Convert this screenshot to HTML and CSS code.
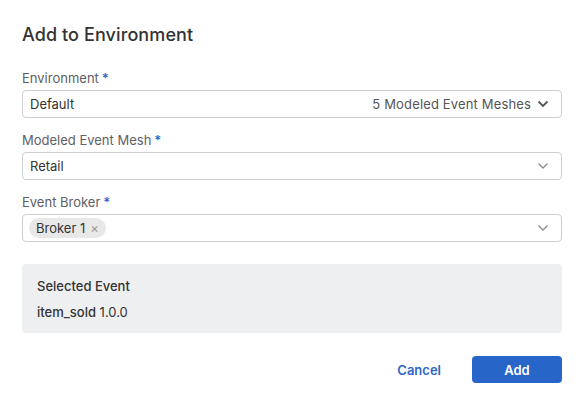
FILE: index.html
```html
<!DOCTYPE html>
<html>
<head>
<meta charset="utf-8">
<link rel="stylesheet" href="styles.css">
</head>
<body>
<div class="dialog">
  <h1 class="title">Add to Environment</h1>
  <div class="field">
    <div class="label">Environment<span class="req">*</span></div>
    <div class="select">
      <span class="value">Default</span>
      <span class="extra">5 Modeled Event Meshes</span>
      <svg class="chev dark" width="12" height="8" viewBox="0 0 12 8"><path d="M1.5 1.5 L6 6 L10.5 1.5" fill="none" stroke="#555" stroke-width="1.8"/></svg>
    </div>
  </div>
  <div class="field">
    <div class="label">Modeled Event Mesh<span class="req">*</span></div>
    <div class="select">
      <span class="value">Retail</span>
      <svg class="chev" width="12" height="8" viewBox="0 0 12 8"><path d="M1.5 1.5 L6 6 L10.5 1.5" fill="none" stroke="#8a8f96" stroke-width="1.4"/></svg>
    </div>
  </div>
  <div class="field">
    <div class="label">Event Broker<span class="req">*</span></div>
    <div class="select multi">
      <span class="chip">Broker 1 <span class="x">×</span></span>
      <svg class="chev" width="12" height="8" viewBox="0 0 12 8"><path d="M1.5 1.5 L6 6 L10.5 1.5" fill="none" stroke="#8a8f96" stroke-width="1.4"/></svg>
    </div>
  </div>
  <div class="summary">
    <div class="sum-title">Selected Event</div>
    <div class="sum-body"><span class="name">item_sold</span> 1.0.0</div>
  </div>
  <div class="actions">
    <button class="cancel">Cancel</button>
    <button class="add">Add</button>
  </div>
</div>
</body>
</html>
```
FILE: styles.css
```css
* { box-sizing: border-box; }
html, body { margin: 0; padding: 0; background: #fff; }
body {
  font-family: Inter, "Noto Sans", sans-serif;
  color: #333;
}
.dialog {
  padding: 23px 21px 0 22px;
  display: flex;
  flex-direction: column;
}
.title {
  margin: 0 0 23px 0;
  font-size: 18px;
  font-weight: 500;
  line-height: 24px;
  color: #333;
  letter-spacing: 0.1px;
}
.field { display: flex; flex-direction: column; margin-bottom: 14px; }
.label {
  font-size: 13px;
  line-height: 16px;
  color: #5e6065;
  margin-bottom: 4px;
}
.req { color: #2e67c7; margin-left: 3px; font-weight: 600; }
.select {
  height: 28px;
  border: 1px solid #ccced2;
  border-radius: 4px;
  display: flex;
  align-items: center;
  padding: 0 12px 0 7px;
  font-size: 13px;
  color: #333;
}
.select .value { flex: 1; }
.select .extra { color: #555; margin-right: 6px; letter-spacing: 0.15px; }
.select.multi { padding-left: 6px; justify-content: space-between; }
.chip {
  background: #e8e8e8;
  border-radius: 10px;
  height: 20px;
  padding: 0 7px 0 7px;
  display: inline-flex;
  align-items: center;
  font-size: 13px;
  color: #333;
}
.chip .x { color: #9a9a9a; margin-left: 5px; font-size: 13px; }
.chev { display: block; }
.summary {
  margin-top: 8px;
  background: #eeeff1;
  border-radius: 4px;
  height: 69px;
  padding: 14px 15px;
  font-size: 13px;
  color: #333;
}
.sum-title { font-weight: 500; line-height: 16px; margin-bottom: 10px; }
.sum-body { line-height: 16px; }
.sum-body .name { font-weight: 500; }
.actions {
  display: flex;
  justify-content: flex-end;
  align-items: center;
  margin-top: 23px;
  gap: 31px;
}
button { font-family: inherit; font-size: 13px; font-weight: 600; cursor: pointer; }
.cancel {
  background: none; border: none; color: #2e67c7; padding: 0;
}
.add {
  background: #2765c8; color: #fff; border: none; border-radius: 4px;
  width: 90px; height: 27px;
}
```
